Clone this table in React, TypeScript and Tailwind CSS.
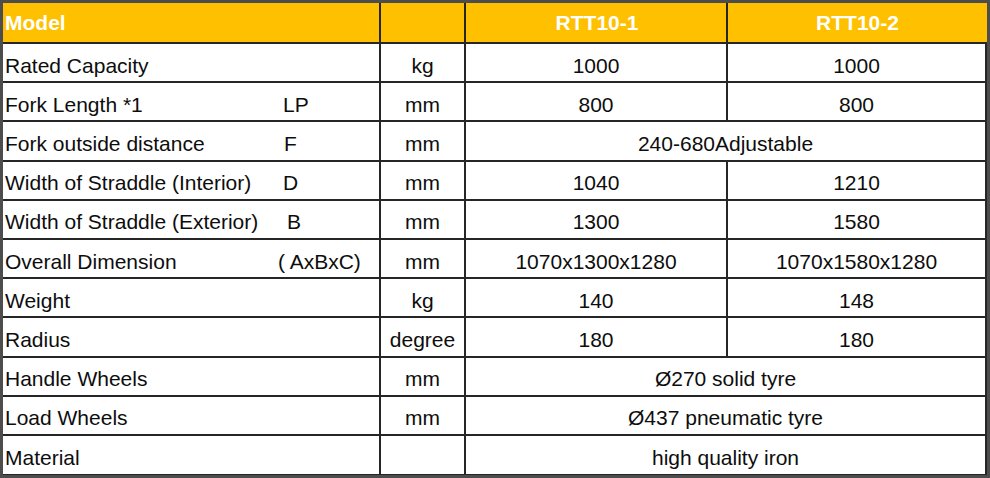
import React from "react";

type Row = {
  label: string;
  code?: string;
  codeClass?: string;
  unit: string;
  a: string;
  b?: string;
};

const rows: Row[] = [
  { label: "Rated Capacity", unit: "kg", a: "1000", b: "1000" },
  { label: "Fork Length *1", code: "LP", codeClass: "pl-0", unit: "mm", a: "800", b: "800" },
  { label: "Fork outside distance", code: "F", codeClass: "pl-[1px]", unit: "mm", a: "240-680Adjustable" },
  { label: "Width of Straddle (Interior)", code: "D", codeClass: "pl-0", unit: "mm", a: "1040", b: "1210" },
  { label: "Width of Straddle (Exterior)", code: "B", codeClass: "pl-[4px]", unit: "mm", a: "1300", b: "1580" },
  { label: "Overall Dimension", code: "( AxBxC)", codeClass: "-ml-[5px]", unit: "mm", a: "1070x1300x1280", b: "1070x1580x1280" },
  { label: "Weight", unit: "kg", a: "140", b: "148" },
  { label: "Radius", unit: "degree", a: "180", b: "180" },
  { label: "Handle Wheels", unit: "mm", a: "Ø270 solid tyre" },
  { label: "Load Wheels", unit: "mm", a: "Ø437 pneumatic tyre" },
  { label: "Material", unit: "", a: "high quality iron" },
];

const line = "border-[#262626]";

function App() {
  return (
    <div
      className="w-[990px] h-[478px] border-[3px] border-[#4d4d4d] bg-white text-[21px] leading-none text-[#0d0d0d]"
      style={{ fontFamily: '"Liberation Sans", Arial, sans-serif' }}
    >
      <div className={`flex h-[41px] bg-[#ffc000] border-b-2 ${line} font-bold text-white`}>
        <div className={`w-[378px] shrink-0 border-r-2 ${line} flex items-center pl-[2px]`}>Model</div>
        <div className={`w-[85px] shrink-0 border-r-2 ${line}`} />
        <div className={`w-[262px] shrink-0 border-r-2 ${line} flex items-center justify-center pl-[2px]`}>RTT10-1</div>
        <div className="flex-1 flex items-center justify-center">RTT10-2</div>
      </div>
      {rows.map((r, i) => (
        <div
          key={i}
          className={`flex h-[39.2px] border-b-2 ${line} ${i === rows.length - 1 ? "border-b-[1px]" : ""}`}
        >
          <div className={`w-[378px] shrink-0 border-r-2 ${line} flex items-center pl-[2px] pt-[5px]`}>
            <span className="w-[278px] shrink-0">{r.label}</span>
            {r.code && <span className={r.codeClass}>{r.code}</span>}
          </div>
          <div className={`w-[85px] shrink-0 border-r-2 ${line} flex items-center justify-center pt-[5px]`}>{r.unit}</div>
          {r.b !== undefined ? (
            <>
              <div className={`w-[262px] shrink-0 border-r-2 ${line} flex items-center justify-center pt-[5px]`}>{r.a}</div>
              <div className={`flex-1 border-r-2 ${line} flex items-center justify-center pt-[5px]`}>{r.b}</div>
            </>
          ) : (
            <div className={`flex-1 border-r-2 ${line} flex items-center justify-center pt-[5px]`}>{r.a}</div>
          )}
        </div>
      ))}
    </div>
  );
}

export default App;
